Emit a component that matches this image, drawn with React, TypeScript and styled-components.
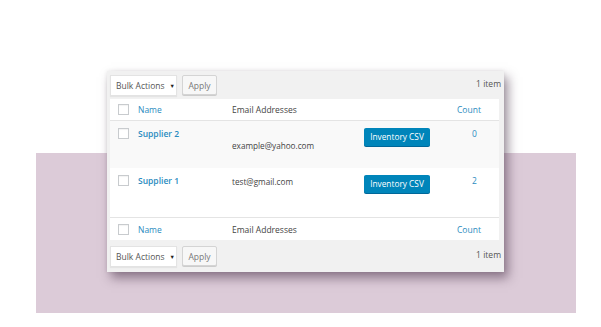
import styled, { createGlobalStyle } from "styled-components";

const GlobalStyle = createGlobalStyle`
  html, body {
    margin: 0;
    padding: 0;
    background: #ffffff;
  }
  body {
    font-family: "Open Sans", "Liberation Sans", sans-serif;
    -webkit-font-smoothing: antialiased;
  }
`;

interface Supplier {
  name: string;
  email: string;
  count: number;
  emailOffset: number;
  striped: boolean;
  height: number;
}

const suppliers: Supplier[] = [
  { name: "Supplier 2", email: "example@yahoo.com", count: 0, emailOffset: 12, striped: true, height: 47 },
  { name: "Supplier 1", email: "test@gmail.com", count: 2, emailOffset: 1, striped: false, height: 49 },
];

function Toolbar({ bottom }: { bottom?: boolean }) {
  return (
    <Bar $bottom={bottom}>
      <Controls>
        <Select>
          Bulk Actions <Caret>▼</Caret>
        </Select>
        <ApplyButton>Apply</ApplyButton>
      </Controls>
      <ItemCount>1 item</ItemCount>
    </Bar>
  );
}

function HeadRow({ footer }: { footer?: boolean }) {
  return (
    <Head $footer={footer}>
      <Check />
      <SortLink>Name</SortLink>
      <HeadText>Email Addresses</HeadText>
      <span />
      <CountHead>Count</CountHead>
    </Head>
  );
}

export default function App() {
  return (
    <>
      <GlobalStyle />
      <Stage>
        <Card>
          <Toolbar />
          <Table>
            <HeadRow />
            {suppliers.map((s) => (
              <Row key={s.name} $striped={s.striped} $height={s.height}>
                <Check />
                <SupplierName>{s.name}</SupplierName>
                <Email $offset={s.emailOffset}>{s.email}</Email>
                <CsvButton>Inventory CSV</CsvButton>
                <CountValue>{s.count}</CountValue>
              </Row>
            ))}
            <HeadRow footer />
          </Table>
          <Toolbar bottom />
        </Card>
        <Band />
      </Stage>
    </>
  );
}

const Stage = styled.div`
  display: grid;
  grid-template-columns: 36px 71px 397px 72px 25px;
  grid-template-rows: 71px 82px 119px 41px;
  width: 601px;
  height: 327px;
`;

const Band = styled.div`
  grid-column: 2 / 5;
  grid-row: 3 / 5;
  background: #dccbd8;
`;

const Card = styled.div`
  grid-column: 3;
  grid-row: 2 / 4;
  z-index: 1;
  background: #f1f1f1;
  padding: 0 5px 0 3px;
  display: flex;
  flex-direction: column;
  box-shadow: 4px 6px 10px rgba(60, 35, 60, 0.5), 0 0 4px rgba(0, 0, 0, 0.08);
`;

const Bar = styled.div<{ $bottom?: boolean }>`
  height: ${(p) => (p.$bottom ? 32 : 28)}px;
  display: flex;
  align-items: flex-start;
  justify-content: space-between;
  padding-top: ${(p) => (p.$bottom ? 6 : 4)}px;
  box-sizing: border-box;
`;

const Controls = styled.div`
  display: flex;
  gap: 5px;
`;

const Select = styled.div`
  width: 67px;
  height: 21px;
  box-sizing: border-box;
  background: #ffffff;
  border: 1px solid #e3e3e3;
  box-shadow: 0 1px 1px rgba(0, 0, 0, 0.05);
  font-size: 8.5px;
  color: #555;
  display: flex;
  align-items: center;
  padding-left: 5px;
  gap: 5px;
`;

const Caret = styled.span`
  font-size: 5.5px;
  color: #222;
`;

const ApplyButton = styled.div`
  width: 35px;
  height: 20px;
  box-sizing: border-box;
  background: #f7f7f7;
  border: 1px solid #d4d4d4;
  border-radius: 2px;
  box-shadow: 0 1px 0 #cccccc;
  font-size: 8.5px;
  color: #777;
  display: flex;
  align-items: center;
  justify-content: center;
`;

const ItemCount = styled.span`
  font-size: 8.5px;
  color: #555;
  line-height: 18px;
  margin-right: -2px;
`;

const Table = styled.div`
  background: #ffffff;
  display: flex;
  flex-direction: column;
`;

const columns = "28px 94px 132px 66px 1fr";

const Head = styled.div<{ $footer?: boolean }>`
  display: grid;
  grid-template-columns: ${columns};
  align-items: center;
  height: ${(p) => (p.$footer ? 23 : 22)}px;
  box-sizing: border-box;
  border-top: ${(p) => (p.$footer ? "1px solid #e4e4e4" : "none")};
  border-bottom: ${(p) => (p.$footer ? "none" : "1px solid #e4e4e4")};
  font-size: 8.5px;
`;

const Check = styled.span`
  width: 11px;
  height: 11px;
  margin-left: 8px;
  box-sizing: border-box;
  border: 1px solid #c8cbce;
  background: #ffffff;
  box-shadow: inset 0 1px 1px rgba(0, 0, 0, 0.05);
`;

const SortLink = styled.span`
  color: #2b8cc0;
`;

const HeadText = styled.span`
  color: #444;
`;

const CountHead = styled.span`
  color: #2b8cc0;
  margin-left: 27px;
`;

const Row = styled.div<{ $striped: boolean; $height: number }>`
  display: grid;
  grid-template-columns: ${columns};
  align-items: start;
  height: ${(p) => p.$height}px;
  box-sizing: border-box;
  padding-top: 7px;
  background: ${(p) => (p.$striped ? "#f9f9f9" : "#ffffff")};
  font-size: 8.5px;
  line-height: 12px;
`;

const SupplierName = styled.span`
  color: #2b8cc0;
  font-weight: 600;
`;

const Email = styled.span<{ $offset: number }>`
  color: #444;
  font-size: 8.2px;
  padding-top: ${(p) => p.$offset}px;
`;

const CsvButton = styled.div`
  width: 66px;
  height: 18px;
  background: #0085ba;
  border-radius: 2px;
  box-shadow: 0 1px 0 #006799;
  color: #ffffff;
  font-size: 8.3px;
  display: flex;
  align-items: center;
  justify-content: center;
`;

const CountValue = styled.span`
  color: #2b8cc0;
  margin-left: 42px;
`;
